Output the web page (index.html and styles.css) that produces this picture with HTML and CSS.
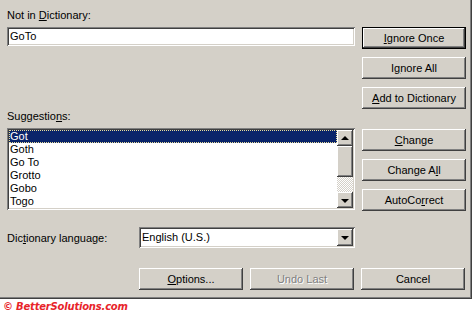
FILE: index.html
```html
<!DOCTYPE html>
<html lang="en">
<head>
    <meta charset="UTF-8">
    <title>Spelling</title>
    <link rel="stylesheet" href="styles.css">
</head>
<body>
    <div class="dialog">
        <div class="upper">
            <div class="col-left">
                <div class="label">Not in <u>D</u>ictionary:</div>
                <div class="field">GoTo</div>
                <div class="label label-sugg">Suggestio<u>n</u>s:</div>
                <div class="listbox">
                    <ul class="items">
                        <li class="item selected"><span class="focus">Got</span></li>
                        <li class="item">Goth</li>
                        <li class="item">Go To</li>
                        <li class="item">Grotto</li>
                        <li class="item">Gobo</li>
                        <li class="item">Togo</li>
                    </ul>
                    <div class="vscroll">
                        <div class="sbtn"><span class="arrow-up"></span></div>
                        <div class="thumb"></div>
                        <div class="track"></div>
                        <div class="sbtn"><span class="arrow-down"></span></div>
                    </div>
                </div>
            </div>
            <div class="col-right">
                <div class="btn-group">
                    <div class="btn default"><span><u>I</u>gnore Once</span></div>
                    <div class="btn">I<u>g</u>nore All</div>
                    <div class="btn"><u>A</u>dd to Dictionary</div>
                </div>
                <div class="btn-group group-change">
                    <div class="btn"><u>C</u>hange</div>
                    <div class="btn">Change A<u>l</u>l</div>
                    <div class="btn">AutoCo<u>r</u>rect</div>
                </div>
            </div>
        </div>
        <div class="lang-row">
            <div class="lang-label">Dic<u>t</u>ionary language:</div>
            <div class="combo">
                <div class="combo-text">English (U.S.)</div>
                <div class="sbtn combo-btn"><span class="arrow-down"></span></div>
            </div>
        </div>
        <div class="actions">
            <div class="btn"><u>O</u>ptions...</div>
            <div class="btn disabled">Undo Last</div>
            <div class="btn">Cancel</div>
        </div>
    </div>
    <div class="copyright">© BetterSolutions.com</div>
</body>
</html>
```

FILE: styles.css
```css
:root {
    --face: #d4d0c8;
    --shadow: #808080;
    --dark: #404040;
    --light: #ffffff;
    --select: #0a246a;
    --raised: inset -1px -1px var(--dark), inset 1px 1px var(--light),
              inset -2px -2px var(--shadow), inset 2px 2px var(--face);
    --sunken: inset 1px 1px var(--shadow), inset -1px -1px var(--light),
              inset 2px 2px var(--dark), inset -2px -2px var(--face);
}

body {
    margin: 0;
    background: #fff;
    font-family: 'Liberation Sans', Arial, sans-serif;
    font-size: 11px;
    color: #000;
}

u {
    text-decoration: underline;
    text-underline-offset: 1px;
}

.dialog {
    width: 472px;
    height: 299px;
    box-sizing: border-box;
    padding: 9px 0 0 7px;
    background: var(--face);
    box-shadow: inset -1px -1px var(--dark), inset -2px -2px var(--shadow);
}

.upper {
    display: grid;
    grid-template-columns: 348px 104px;
    column-gap: 7px;
}

.col-left {
    display: flex;
    flex-direction: column;
}

.label {
    line-height: 13px;
    height: 13px;
}

.field {
    margin-top: 5px;
    height: 19px;
    line-height: 19px;
    padding-left: 3px;
    background: #fff;
    box-shadow: var(--sunken);
}

.label-sugg {
    margin-top: 64px;
}

.listbox {
    margin-top: 5px;
    height: 82px;
    box-sizing: border-box;
    padding: 2px;
    display: flex;
    background: #fff;
    box-shadow: var(--sunken);
}

.items {
    flex: 1;
    list-style: none;
    margin: 0;
    padding: 0;
}

.item {
    height: 13px;
    line-height: 13px;
    padding-left: 1px;
}

.item.selected {
    background: var(--select);
    color: #fff;
    padding-left: 0;
}

.focus {
    display: block;
    height: 11px;
    line-height: 11px;
    border: 1px dotted #e8dc9a;
}

.vscroll {
    width: 16px;
    display: flex;
    flex-direction: column;
}

.sbtn {
    width: 16px;
    height: 16px;
    background: var(--face);
    box-shadow: var(--raised);
    display: flex;
    align-items: center;
    justify-content: center;
}

.thumb {
    height: 31px;
    background: var(--face);
    box-shadow: var(--raised);
}

.track {
    flex: 1;
    background: repeating-conic-gradient(var(--face) 0 25%, #fff 0 50%) 0 0 / 2px 2px;
}

.arrow-up,
.arrow-down {
    width: 0;
    height: 0;
    border-left: 4px solid transparent;
    border-right: 4px solid transparent;
}

.arrow-up {
    border-bottom: 4px solid #000;
    margin-top: -1px;
}

.arrow-down {
    border-top: 4px solid #000;
    margin-top: 1px;
}

.col-right {
    padding-top: 18px;
}

.btn-group {
    display: flex;
    flex-direction: column;
    gap: 8px;
}

.group-change {
    margin-top: 20px;
}

.btn {
    width: 104px;
    height: 22px;
    box-sizing: border-box;
    display: flex;
    align-items: center;
    justify-content: center;
    background: var(--face);
    box-shadow: var(--raised);
}

.btn.default {
    border: 1px solid #000;
    box-shadow: none;
}

.btn.default span {
    width: 100%;
    height: 100%;
    display: flex;
    align-items: center;
    justify-content: center;
    box-shadow: var(--raised);
}

.btn.disabled {
    color: var(--shadow);
    text-shadow: 1px 1px #fff;
}

.lang-row {
    margin-top: 16px;
    display: flex;
    align-items: center;
}

.lang-label {
    width: 132px;
}

.combo {
    width: 216px;
    height: 21px;
    box-sizing: border-box;
    padding: 2px;
    display: flex;
    background: #fff;
    box-shadow: var(--sunken);
}

.combo-text {
    flex: 1;
    line-height: 17px;
    padding-left: 1px;
}

.combo-btn {
    height: 17px;
}

.actions {
    margin-top: 20px;
    padding-left: 132px;
    display: flex;
    gap: 7px;
}

.copyright {
    margin: 2px 0 0 3px;
    font-family: 'DejaVu Sans', Verdana, sans-serif;
    font-style: italic;
    font-weight: bold;
    font-size: 10px;
    line-height: 12px;
    letter-spacing: -0.2px;
    color: #e8242a;
}
```
